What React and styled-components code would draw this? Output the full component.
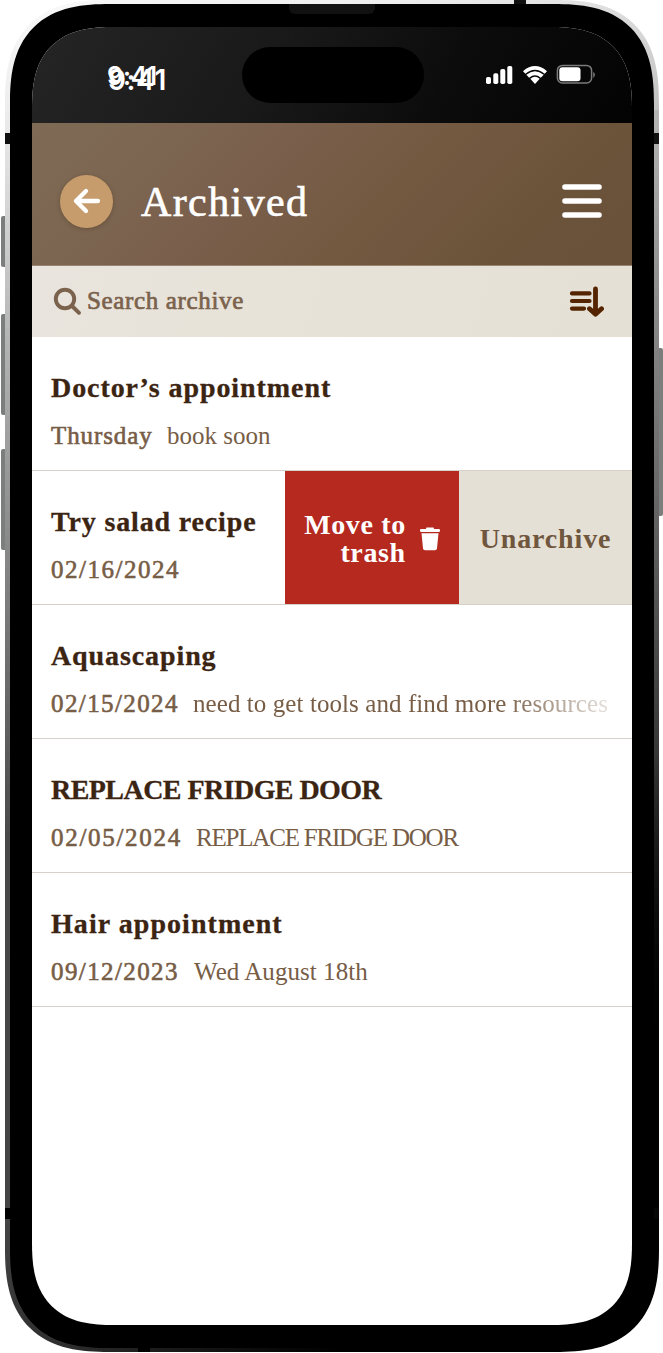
import React from "react";
import styled, { createGlobalStyle, css } from "styled-components";

const Global = createGlobalStyle`
  * { box-sizing: border-box; }
  body { margin: 0; background: #fff; overflow: hidden; font-family: "Liberation Serif", serif; }
`;

const smooth = (plain, wide) => css`
  border-radius: ${plain}px;
  @supports (corner-shape: superellipse(1.37)) {
    border-radius: ${wide}px;
    corner-shape: superellipse(1.37);
  }
`;

const Phone = styled.div`
  display: flex;
  width: 663px;
  height: 1353px;
`;

const ButtonRail = styled.div`
  display: flex;
  flex-direction: column;
  align-items: flex-end;
  width: ${(p) => (p.$right ? 4 : 5)}px;
  padding-top: ${(p) => (p.$right ? 348 : 216)}px;
`;

const SideButton = styled.div`
  width: 4px;
  height: ${(p) => p.$length}px;
  margin-bottom: ${(p) => p.$after || 0}px;
  border-radius: ${(p) => (p.$right ? "0 2px 2px 0" : "2px 0 0 2px")};
  background: #7c7e7e;
`;

const Frame = styled.div`
  position: relative;
  width: 654px;
  height: 1352px;
  padding: 4px 5px;
  background:
    radial-gradient(circle at 100% 100%, #000 0 320px, transparent 600px),
    linear-gradient(#b5b5b5 0%, #858585 20%, #3b3b3b 55%, #111 78%, #000 100%) right 110px / 6px 1130px no-repeat,
    linear-gradient(165deg, #fafafa 0%, #eee 7%, #b5b5b5 22%, #888 36%, #484848 55%, #444 80%, #161616 100%);
  ${smooth(84, 104)}
`;

const AntennaLayer = styled.div`
  position: absolute;
  inset: 0;
  display: flex;
  flex-direction: column;
  justify-content: space-between;
`;

const AntennaPair = styled.div`
  display: flex;
  justify-content: space-between;
`;

const Antenna = styled.i`
  width: 5px;
  height: 11px;
  background: ${(p) => p.$color || "#111"};
`;

const EdgeAntenna = styled.i`
  align-self: ${(p) => (p.$end ? "flex-end" : "flex-start")};
  width: 12px;
  height: 4px;
  margin: ${(p) => (p.$end ? "0 133px 0 0" : "0 0 0 133px")};
  background: ${(p) => (p.$end ? "#111" : "#000")};
`;

const AntennaSides = styled.div`
  flex: 1;
  display: flex;
  flex-direction: column;
  justify-content: space-between;
  padding: 129px 0;
`;

const Bezel = styled.div`
  position: relative;
  display: flex;
  flex-direction: column;
  align-items: center;
  height: 1344px;
  background: #000;
  ${smooth(80, 100)}
`;

const Speaker = styled.div`
  width: 86px;
  height: 10px;
  margin-bottom: 13px;
  border-radius: 0 0 6px 6px;
  background: #111;
`;

const Screen = styled.main`
  width: 600px;
  height: 1298px;
  overflow: hidden;
  background: #fff;
  ${smooth(62, 82)}
`;

const StatusBar = styled.div`
  display: flex;
  align-items: flex-start;
  height: 96px;
  padding-top: 20px;
  background: linear-gradient(120deg, #252525 0%, #191919 40%, #0c0c0c 68%, #030303 100%);
`;

const Clock = styled.div`
  display: grid;
  align-items: start;
  width: 210px;
  height: 56px;
  padding: 14px 0 0 75px;
  color: #fff;
  font-family: Inter, "Liberation Sans", sans-serif;
  font-weight: 600;
  line-height: 30px;
`;

const Time = styled.span`
  grid-area: 1 / 1;
  padding: ${(p) => (p.$front ? "4px 0 0 1px" : "0")};
  font-size: ${(p) => (p.$front ? 28 : 25)}px;
  letter-spacing: ${(p) => (p.$front ? 0.6 : -0.1)}px;
`;

const Island = styled.div`
  width: 182px;
  height: 56px;
  border-radius: 28px;
  background: #000;
`;

const Signals = styled.svg`
  display: block;
  margin: 15px 0 0 61px;
`;

const Header = styled.header`
  display: flex;
  align-items: center;
  height: 143px;
  padding: 14px 30px 0 28px;
  border-bottom: 1px solid #9a8370;
  background: linear-gradient(135deg, #7f6b55 0%, #7c6651 20%, #7a604d 34%, #745941 58%, #6c543b 78%, #69513a 100%);
`;

const Back = styled.button`
  display: grid;
  place-items: center;
  width: 53px;
  height: 53px;
  padding: 0;
  border: 0;
  border-radius: 50%;
  background: #c69c6d;
  box-shadow: 0 1px 4px rgba(60, 35, 10, 0.3);
`;

const PageTitle = styled.h1`
  flex: 1;
  margin: 0 0 0 28px;
  padding-top: 2px;
  color: #fff;
  font-size: 42px;
  line-height: 48px;
  font-weight: 400;
  letter-spacing: 1.4px;
  -webkit-text-stroke: 0.6px #fff;
`;

const Search = styled.div`
  display: flex;
  align-items: center;
  height: 71px;
  padding: 0 28px 0 21px;
  color: #7b624c;
  background: linear-gradient(110deg, #e9e4dd, #e7e3d9 35%, #e4e0d5);
`;

const SearchLabel = styled.span`
  flex: 1;
  margin: 0 0 1px 5px;
  font-size: 25px;
  line-height: 30px;
  letter-spacing: 0.65px;
  -webkit-text-stroke: 0.7px;
`;

const Row = styled.article`
  display: flex;
  height: 134px;
  border-bottom: 1.5px solid #d7d2c9;
`;

const Note = styled.div`
  flex: 1;
  min-width: 0;
  padding: 33.5px 0 0 19px;
  white-space: nowrap;
`;

const NoteTitle = styled.h2`
  margin: 0 0 15px;
  color: #3b2412;
  font-size: 28px;
  line-height: 34px;
  font-weight: 700;
  letter-spacing: ${(p) => p.$spacing}px;
  -webkit-text-stroke: 0.3px;
`;

const Meta = styled.p`
  display: flex;
  margin: 0;
  color: #775d46;
  font-size: 25px;
  line-height: 31px;
`;

const When = styled.span`
  flex: none;
  width: ${(p) => p.$width}px;
  letter-spacing: ${(p) => p.$spacing}px;
  -webkit-text-stroke: 0.6px;
`;

const Preview = styled.span`
  letter-spacing: ${(p) => p.$spacing}px;
  ${(p) =>
    p.$fade &&
    css`
      mask-image: linear-gradient(90deg, #000 74%, rgba(0, 0, 0, 0.18) 100%);
    `}
`;

const Action = styled.button`
  display: flex;
  align-items: center;
  justify-content: center;
  gap: 14px;
  width: ${(p) => (p.$danger ? 174 : 173)}px;
  padding: 2px 0 0;
  border: 0;
  color: ${(p) => (p.$danger ? "#fff" : "#70563d")};
  background: ${(p) => (p.$danger ? "#b5291f" : "#e4e0d5")};
  font: 700 28px/28px "Liberation Serif", serif;
  letter-spacing: ${(p) => (p.$danger ? 0.65 : 0.85)}px;
  text-align: right;
`;

const notes = [
  { title: "Doctor’s appointment", ts: 0.93, when: "Thursday", ws: 0.9, ww: 116, text: "book soon", ps: 0 },
  { title: "Try salad recipe", ts: 0.85, when: "02/16/2024", ws: 1.5, ww: 140, actions: true },
  { title: "Aquascaping", ts: 0.9, when: "02/15/2024", ws: 1.4, ww: 142, text: "need to get tools and find more resources", ps: 0.08, fade: true },
  { title: "REPLACE FRIDGE DOOR", ts: -0.55, when: "02/05/2024", ws: 1.7, ww: 145, text: "REPLACE FRIDGE DOOR", ps: -1.2 },
  { title: "Hair appointment", ts: 1.05, when: "09/12/2023", ws: 1.4, ww: 143, text: "Wed August 18th", ps: 0.05 },
];

export default function App() {
  return (
    <>
      <Global />
      <Phone>
        <ButtonRail>
          <SideButton $length={51} $after={47} />
          <SideButton $length={101} $after={34} />
          <SideButton $length={101} />
        </ButtonRail>
        <Frame>
          <AntennaLayer>
            <EdgeAntenna $end />
            <AntennaSides>
              <AntennaPair>
                <Antenna />
                <Antenna />
              </AntennaPair>
              <AntennaPair>
                <Antenna $color="#000" />
                <Antenna $color="#070707" />
              </AntennaPair>
            </AntennaSides>
            <EdgeAntenna />
          </AntennaLayer>
          <Bezel>
            <Speaker />
            <Screen>
              <StatusBar>
                <Clock>
                  <Time>9:41</Time>
                  <Time $front>9:41</Time>
                </Clock>
                <Island />
                <Signals width="112" height="24" viewBox="485 62 112 24" fill="#fff">
                  <rect x="486" y="77" width="5" height="7" rx="1.8" />
                  <rect x="493.3" y="73.3" width="5" height="10.7" rx="1.8" />
                  <rect x="500.3" y="69" width="5" height="15" rx="1.8" />
                  <rect x="507.3" y="66" width="5" height="18" rx="1.8" />
                  <path d="M523 71.2Q535 61 547 71.2L544.6 73.8Q535 65.8 525.4 73.8Z" />
                  <path d="M526.3 74.7Q535 67.6 543.7 74.7L540.8 77.7Q535 73 529.200 77.700Z" />
                  <path d="M530.3 78.7Q535 74.8 539.700 78.700L535 84Z" />
                  <rect x="557.4" y="65.4" width="34.2" height="17.600" rx="5" fill="none" stroke="#7b7b7b" strokeWidth="1.5" />
                  <rect x="559.3" y="67.3" width="21.2" height="13.9" rx="3" />
                  <path d="M593.3 71.8Q596.5 74.500 593.3 78Z" fill="#858585" />
                </Signals>
              </StatusBar>
              <Header>
                <Back aria-label="Back">
                  <svg width="30" height="28" viewBox="0 0 30 28" fill="none" stroke="#fff" strokeWidth="4.300" strokeLinecap="round" strokeLinejoin="round">
                    <path d="M14 4 4 14l10 10M4 14h22" />
                  </svg>
                </Back>
                <PageTitle>Archived</PageTitle>
                <svg width="40" height="36" viewBox="0 0 40 36" stroke="#fff" strokeWidth="5.600" strokeLinecap="round">
                  <path d="M3 4h34M3 18h34M3 32h34" />
                </svg>
              </Header>
              <Search>
                <svg width="29" height="29" viewBox="0 0 29 29" fill="none" stroke="#7b624c" strokeWidth="3.900" strokeLinecap="round">
                  <circle cx="12" cy="12" r="9.200" />
                  <path d="m19 19 7 6.800" />
                </svg>
                <SearchLabel>Search archive</SearchLabel>
                <svg width="35" height="32" viewBox="0 0 35 32" fill="none" stroke="#542400" strokeLinecap="round" strokeLinejoin="round">
                  <path d="M3 7.400h17.500M3 15h17.500M3 22.600h12" strokeWidth="4.200" />
                  <path d="M26.500 3v24M20.500 22.700l6 5.500 6-5.500" strokeWidth="4.800" />
                  <path d="M22 23.500h9l-4.500 4.500Z" fill="#542400" stroke="none" />
                </svg>
              </Search>
              {notes.map((n) => (
                <Row key={n.title}>
                  <Note>
                    <NoteTitle $spacing={n.ts}>{n.title}</NoteTitle>
                    <Meta>
                      <When $spacing={n.ws} $width={n.ww}>{n.when}</When>
                      {n.text && <Preview $spacing={n.ps} $fade={n.fade}>{n.text}</Preview>}
                    </Meta>
                  </Note>
                  {n.actions && (
                    <>
                      <Action $danger>
                        <span>Move to<br />trash</span>
                        <svg width="20" height="24" viewBox="0 0 20 24" fill="#fff">
                          <rect x="0" y="2" width="20" height="3" rx="1.2" />
                          <rect x="6" y="0.600" width="8" height="3" rx="1" />
                          <path d="M1.500 6.200H18.500L17 21.300Q16.800 23.300 14.800 23.300H5.200Q3.200 23.300 3 21.300Z" />
                        </svg>
                      </Action>
                      <Action>Unarchive</Action>
                    </>
                  )}
                </Row>
              ))}
            </Screen>
          </Bezel>
        </Frame>
        <ButtonRail $right>
          <SideButton $right $length={168} />
        </ButtonRail>
      </Phone>
    </>
  );
}
